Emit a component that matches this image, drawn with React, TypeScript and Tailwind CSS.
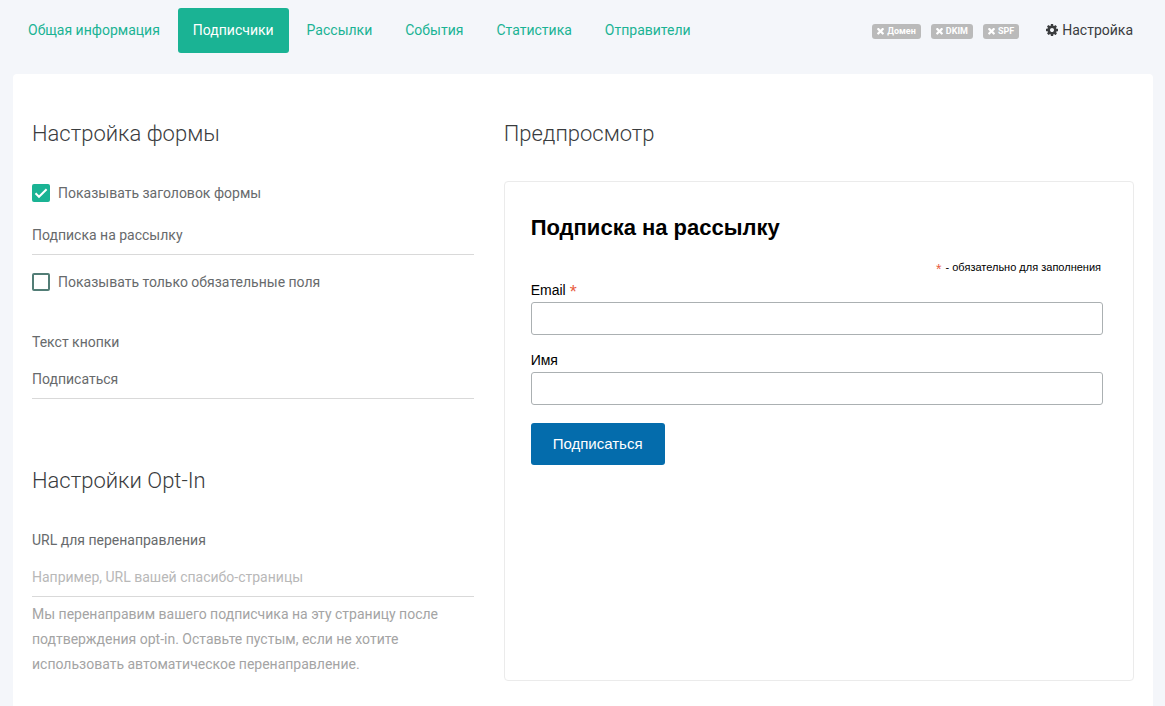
import { useState } from "react";

const tabs = [
  "Общая информация",
  "Подписчики",
  "Рассылки",
  "События",
  "Статистика",
  "Отправители",
];

const checks = ["Домен", "DKIM", "SPF"];

function TimesIcon() {
  return (
    <svg viewBox="110 302 1188 1188" className="size-[7px]" fill="currentColor" aria-hidden="true">
      <path d="M1298 1214q0 40-28 68l-136 136q-28 28-68 28t-68-28l-294-294-294 294q-28 28-68 28t-68-28l-136-136q-28-28-28-68t28-68l294-294-294-294q-28-28-28-68t28-68l136-136q28-28 68-28t68 28l294 294 294-294q28-28 68-28t68 28l136 136q28 28 28 68t-28 68l-294 294 294 294q28 28 28 68z" />
    </svg>
  );
}

function CogIcon() {
  return (
    <svg viewBox="128 128 1536 1536" className="size-3" fill="currentColor" aria-hidden="true">
      <path d="M1152 896q0-106-75-181t-181-75-181 75-75 181 75 181 181 75 181-75 75-181zm512-109v222q0 12-8 23t-20 13l-185 28q-19 54-39 91 35 50 107 138 10 12 10 25t-9 23q-27 37-99 108t-94 71q-12 0-26-9l-138-108q-44 23-91 38-16 136-29 186-7 28-36 28h-222q-14 0-24.5-8.5t-11.5-21.5l-28-184q-49-16-90-37l-141 107q-10 9-25 9-14 0-25-11-126-114-165-168-7-10-7-23 0-12 8-23 15-21 51-66.5t54-70.5q-27-50-41-99l-183-27q-13-2-21-12.5t-8-23.5v-222q0-12 8-23t19-13l186-28q14-46 39-92-40-57-107-138-10-12-10-24 0-10 9-23 26-36 98.5-107.5t94.5-71.5q13 0 26 10l138 107q44-23 91-38 16-136 29-186 7-28 36-28h222q14 0 24.5 8.5t11.5 21.5l28 184q49 16 90 37l142-107q9-9 24-9 13 0 25 10 129 119 165 170 7 8 7 22 0 12-8 23-15 21-51 66.5t-54 70.5q26 50 41 98l183 28q13 2 21 12.5t8 23.5z" />
    </svg>
  );
}

type CheckboxProps = {
  label: string;
  checked: boolean;
  onChange: (value: boolean) => void;
};

function Checkbox({ label, checked, onChange }: CheckboxProps) {
  return (
    <label className="flex h-6 items-center gap-2">
      <span className="grid size-[18px] shrink-0">
        <input
          type="checkbox"
          checked={checked}
          onChange={(e) => onChange(e.target.checked)}
          className="peer col-start-1 row-start-1 size-[18px] appearance-none rounded-xs border-2 border-[#527d76] checked:border-[#1ab394] checked:bg-[#1ab394]"
        />
        <svg
          viewBox="0 0 18 18"
          className="pointer-events-none invisible col-start-1 row-start-1 size-[18px] peer-checked:visible"
          fill="none"
          stroke="white"
          strokeWidth="2"
          aria-hidden="true"
        >
          <path d="M3.5 9.2 7 12.8 14.6 5.2" />
        </svg>
      </span>
      {label}
    </label>
  );
}

const headingClass = "text-[22px] leading-[30px] font-light text-[#3a3c3e]";

const fieldClass =
  "block h-[39px] w-full border-b border-[#d9d9d9] bg-transparent text-[#676a6c] outline-none placeholder:text-[#b8b8b8]";

const previewInputClass =
  "mt-0.5 block h-[33px] w-full rounded-[3px] border border-[#abb0b2] bg-white px-2 outline-none";

export default function App() {
  const [showTitle, setShowTitle] = useState(true);
  const [requiredOnly, setRequiredOnly] = useState(false);
  const [title, setTitle] = useState("Подписка на рассылку");
  const [buttonText, setButtonText] = useState("Подписаться");

  return (
    <div className="min-h-screen bg-[#f4f6fa] pt-2 pr-3 pl-[13px] font-['Roboto',sans-serif] text-sm text-[#676a6c]">
      {/* Top navigation */}
      <header className="flex items-center justify-between pr-5">
        <nav className="flex gap-[3px]">
          {tabs.map((tab) => (
            <a
              key={tab}
              href="#"
              className={
                tab === "Подписчики"
                  ? "flex h-[45px] items-center rounded-[3px] bg-[#1ab394] px-[15px] pb-0.5 text-white"
                  : "flex h-[45px] items-center px-[15px] pb-0.5 text-[#1ab394]"
              }
            >
              {tab}
            </a>
          ))}
        </nav>

        <div className="flex items-center">
          <div className="flex gap-2.5 pt-0.5">
            {checks.map((name) => (
              <span
                key={name}
                className="flex h-[15px] items-center gap-[3px] rounded-[3px] bg-[#bababa] px-[5px] text-[9px] leading-[15px] font-bold text-white"
              >
                <TimesIcon />
                {name}
              </span>
            ))}
          </div>
          <a href="#" className="ml-[27px] flex items-center gap-1 pb-0.5 text-[#3a3c3e]">
            <CogIcon />
            Настройка
          </a>
        </div>
      </header>

      <main className="mt-[21px] grid grid-cols-12 gap-x-[30px] rounded-t-[4px] bg-white px-[19px] pt-[45px] pb-[25px]">
        {/* Form settings */}
        <section className="col-span-5">
          <h2 className={headingClass}>Настройка формы</h2>

          <div className="mt-8">
            <Checkbox label="Показывать заголовок формы" checked={showTitle} onChange={setShowTitle} />
          </div>
          <input
            type="text"
            aria-label="Заголовок формы"
            value={title}
            onChange={(e) => setTitle(e.target.value)}
            className={`mt-[11px] ${fieldClass}`}
          />
          <div className="mt-[15px]">
            <Checkbox
              label="Показывать только обязательные поля"
              checked={requiredOnly}
              onChange={setRequiredOnly}
            />
          </div>

          <label htmlFor="button-text" className="mt-9 mb-1.5 block leading-6">
            Текст кнопки
          </label>
          <input
            id="button-text"
            type="text"
            value={buttonText}
            onChange={(e) => setButtonText(e.target.value)}
            className={fieldClass}
          />

          <h2 className={`mt-[67px] ${headingClass}`}>Настройки Opt-In</h2>
          <label htmlFor="redirect-url" className="mt-8 mb-1.5 block leading-6">
            URL для перенаправления
          </label>
          <input
            id="redirect-url"
            type="text"
            placeholder="Например, URL вашей спасибо-страницы"
            className={fieldClass}
          />
          <p className="mt-[5px] leading-[25px] text-[#a4a4a4]">
            Мы перенаправим вашего подписчика на эту страницу после подтверждения opt-in. Оставьте
            пустым, если не хотите использовать автоматическое перенаправление.
          </p>
        </section>

        {/* Preview */}
        <section className="col-span-7">
          <h2 className={headingClass}>Предпросмотр</h2>

          <form
            onSubmit={(e) => e.preventDefault()}
            className="mt-8 min-h-[500px] rounded-[4px] border border-[#ebebeb] pt-[30px] pr-[30px] pl-[26px] font-['Liberation_Sans',Arial,sans-serif] text-black"
          >
            {showTitle && <h3 className="text-[22px] leading-8 font-bold">{title}</h3>}
            <p className="mt-[15px] flex justify-end gap-1 pr-0.5 text-[11px] leading-4">
              <span className="h-4 text-sm text-[#e85c41]">*</span>
              <span>- обязательно для заполнения</span>
            </p>

            <div className="mt-[5px] flex flex-col gap-[15px]">
              <div>
                <label htmlFor="email" className="flex h-5 gap-1 leading-5">
                  Email <span className="text-lg leading-6 text-[#e85c41]">*</span>
                </label>
                <input id="email" type="email" className={previewInputClass} />
              </div>
              {!requiredOnly && (
                <div>
                  <label htmlFor="name" className="block leading-5">
                    Имя
                  </label>
                  <input id="name" type="text" className={previewInputClass} />
                </div>
              )}
            </div>

            <button
              type="submit"
              className="mt-[18px] h-[42px] rounded-[3px] bg-[#046cac] px-[22px] text-[15px] text-white"
            >
              {buttonText}
            </button>
          </form>
        </section>
      </main>
    </div>
  );
}
